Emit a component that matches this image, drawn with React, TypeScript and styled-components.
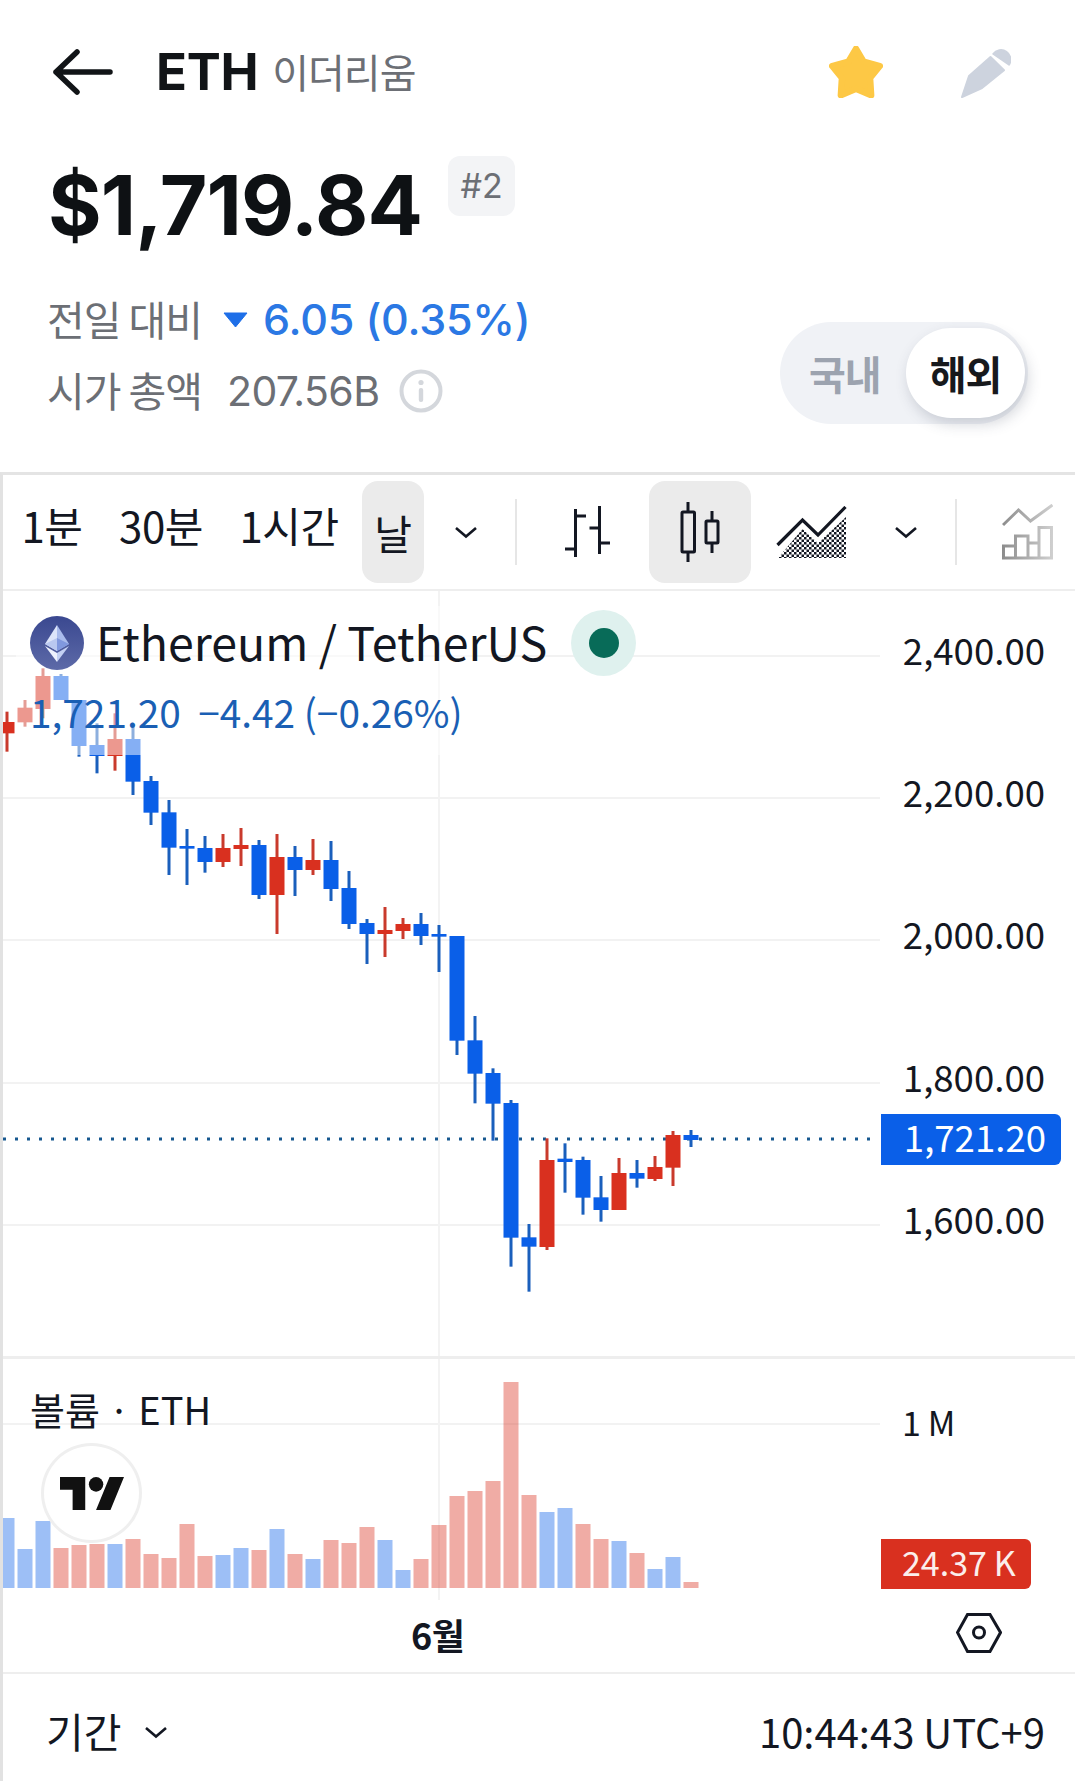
import React from "react";
import styled, { createGlobalStyle } from "styled-components";

const CJK = `"Noto Sans CJK KR", "Noto Sans", sans-serif`;
const INTER = `Inter, "Noto Sans CJK KR", sans-serif`;

const Global = createGlobalStyle`
  html, body { margin: 0; padding: 0; background: #fff; }
  body { font-family: ${CJK}; }
  #root { width: 1075px; height: 1781px; overflow: hidden; }
`;

const Page = styled.div`
  width: 1075px;
  height: 1781px;
  display: flex;
  flex-direction: column;
  background: #fff;
  color: #131722;
`;

const Header = styled.header`
  height: 472px;
  padding: 44px 47px 0 49px;
  box-sizing: border-box;
  display: flex;
  flex-direction: column;
`;

const TopBar = styled.div`
  height: 56px;
  display: flex;
  align-items: center;
`;
const BackIcon = styled.svg`
  margin-left: 4px;
  flex: none;
`;
const Symbol = styled.span`
  margin-left: 43px;
  font: 700 51px/56px ${INTER};
  color: #111417;
  letter-spacing: -0.3px;
`;
const CoinName = styled.span`
  margin-left: 14px;
  margin-bottom: 2px;
  font: 400 40px/56px ${CJK};
  color: #6c6f75;
  letter-spacing: -1px;
`;
const Star = styled.svg`
  margin-left: auto;
  margin-right: 2px;
  flex: none;
`;
const Pencil = styled.svg`
  margin-left: 74px;
  margin-right: 17px;
  flex: none;
`;

const PriceRow = styled.div`
  margin-top: 56px;
  height: 100px;
  display: flex;
  align-items: flex-start;
`;
const Price = styled.span`
  margin-left: -1px;
  font: 700 82px/100px ${INTER};
  color: #0e1114;
  letter-spacing: -0.9px;
`;
const Rank = styled.span`
  margin-left: 26px;
  width: 67px;
  height: 60px;
  border-radius: 12px;
  background: #f3f4f6;
  color: #6c6f75;
  display: flex;
  align-items: center;
  justify-content: center;
  font: 400 34px/60px ${INTER};
`;

const Summary = styled.div`
  margin-top: 34px;
  display: flex;
  justify-content: space-between;
  align-items: flex-start;
`;
const Stats = styled.div`
  display: flex;
  flex-direction: column;
  gap: 11px;
`;
const StatLine = styled.div`
  height: 60px;
  display: flex;
  align-items: center;
`;
const StatLabel = styled.span`
  width: 152px;
  margin-left: -2px;
  margin-bottom: 4px;
  font: 400 41px/60px ${CJK};
  color: #6c6f75;
  letter-spacing: -1px;
  white-space: nowrap;
`;
const DownMark = styled.svg`
  margin-left: 24px;
  flex: none;
`;
const Change = styled.span`
  margin-left: 15px;
  margin-bottom: 2px;
  font: 500 43px/60px ${INTER};
  color: #2b78e4;
  letter-spacing: -0.2px;
`;
const MarketCap = styled.span`
  margin-left: 28px;
  font: 400 41px/60px ${INTER};
  color: #6c6f75;
  letter-spacing: -0.6px;
`;
const InfoIcon = styled.svg`
  margin-left: 20px;
  flex: none;
`;

const Toggle = styled.div`
  margin-top: 32px;
  width: 248px;
  height: 102px;
  box-sizing: border-box;
  padding: 6px 3px 6px 29px;
  border-radius: 51px;
  background: #f0f2f6;
  display: flex;
  align-items: center;
  justify-content: space-between;
`;
const ToggleOff = styled.span`
  font: 700 40px/1 ${CJK};
  color: #9ca3af;
  letter-spacing: -1px;
`;
const ToggleOn = styled.span`
  width: 119px;
  height: 90px;
  border-radius: 45px;
  background: #fff;
  box-shadow: 3px 6px 14px rgba(60, 70, 90, 0.22);
  display: flex;
  align-items: center;
  justify-content: center;
  font: 700 40px/1 ${CJK};
  color: #17191c;
  letter-spacing: -1px;
`;

const Frame = styled.section`
  flex: 1;
  min-height: 0;
  border-top: 3px solid #e4e4e4;
  border-left: 3px solid #e2e2e2;
  display: flex;
  flex-direction: column;
`;

const Toolbar = styled.div`
  height: 116px;
  box-sizing: border-box;
  border-bottom: 2px solid #eeeeee;
  padding-left: 20px;
  display: flex;
  align-items: center;
`;
const Tab = styled.span<{ $w: number; $ml: number }>`
  width: ${(p) => p.$w}px;
  margin-left: ${(p) => p.$ml}px;
  margin-bottom: 14px;
  flex: none;
  display: flex;
  justify-content: center;
  white-space: nowrap;
  font: 400 42px/1.2 ${CJK};
  color: #131722;
  letter-spacing: -0.5px;
`;
const ActiveCell = styled.span<{ $w: number; $ml: number }>`
  width: ${(p) => p.$w}px;
  height: 102px;
  margin-left: ${(p) => p.$ml}px;
  flex: none;
  border-radius: 16px;
  background: #ebebeb;
  display: flex;
  align-items: center;
  justify-content: center;
  font: 400 41px/1 ${CJK};
  color: #131722;
`;
const ToolIcon = styled.svg<{ $ml: number }>`
  margin-left: ${(p) => p.$ml}px;
  flex: none;
`;
const Divider = styled.span<{ $ml: number }>`
  width: 2px;
  height: 66px;
  margin-left: ${(p) => p.$ml}px;
  flex: none;
  background: #e6e6e6;
`;

const PricePane = styled.div`
  position: relative;
  height: 768px;
  box-sizing: border-box;
  border-bottom: 3px solid #eeeeee;
  flex: none;
`;
const ChartCanvas = styled.svg`
  display: block;
`;
const AxisLabel = styled.span<{ $y: number }>`
  position: absolute;
  right: 30px;
  top: ${(p) => p.$y}px;
  transform: translateY(-50%);
  font: 400 36.6px/1 ${CJK};
  color: #131722;
  white-space: nowrap;
`;
const VolumeAxisLabel = styled.span<{ $y: number }>`
  position: absolute;
  left: 899px;
  top: ${(p) => p.$y}px;
  transform: translateY(-50%);
  font: 400 34px/1 ${CJK};
  color: #131722;
  white-space: pre;
`;
const LastPrice = styled.span<{ $y: number }>`
  position: absolute;
  left: 878px;
  top: ${(p) => p.$y}px;
  width: 180px;
  height: 51px;
  box-sizing: border-box;
  padding-right: 15px;
  border-radius: 0 6px 6px 0;
  background: #0a5fe8;
  color: #fff;
  text-align: right;
  font: 400 36.6px/45px ${CJK};
`;
const Legend = styled.div`
  position: absolute;
  left: 13px;
  top: 15px;
  width: 460px;
  height: 149px;
  box-sizing: border-box;
  padding: 4px 0 0 14px;
  background: rgba(255, 255, 255, 0.5);
`;
const LegendTitle = styled.div`
  height: 66px;
  display: flex;
  align-items: center;
`;
const LegendText = styled.span`
  margin-left: 12px;
  font: 400 46.5px/58px ${CJK};
  color: #131722;
  white-space: nowrap;
  transform: translateY(-2px);
`;
const LiveDot = styled.span`
  width: 65px;
  height: 66px;
  margin-left: 24px;
  border-radius: 50%;
  background: #dff1ee;
  display: flex;
  align-items: center;
  justify-content: center;
  flex: none;
  &::after {
    content: "";
    width: 30px;
    height: 30px;
    border-radius: 50%;
    background: #086b58;
  }
`;
const LegendValues = styled.div`
  margin-top: 2px;
  font: 400 38.8px/66px ${CJK};
  color: #1a5fb4;
  white-space: pre;
`;

const VolumePane = styled.div`
  position: relative;
  height: 241px;
  flex: none;
`;
const VolumeTitle = styled.span`
  position: absolute;
  left: 27px;
  top: 27px;
  font: 400 38px/1.2 ${CJK};
  color: #131722;
  white-space: pre;
`;
const TvBadge = styled.span`
  position: absolute;
  left: 38px;
  top: 84px;
  width: 101px;
  height: 100px;
  box-sizing: border-box;
  border-radius: 50%;
  border: 3px solid #efefef;
  background: #fff;
  display: flex;
  align-items: center;
  justify-content: center;
`;
const VolumeTag = styled.span<{ $y: number }>`
  position: absolute;
  left: 878px;
  top: ${(p) => p.$y}px;
  width: 150px;
  height: 50px;
  box-sizing: border-box;
  padding-left: 21px;
  border-radius: 0 6px 6px 0;
  background: #d9301f;
  color: #fbeeec;
  font: 400 34px/45px ${CJK};
  white-space: pre;
`;

const TimeAxis = styled.div`
  height: 74px;
  box-sizing: border-box;
  border-bottom: 2px solid #eeeeee;
  display: flex;
  align-items: center;
  flex: none;
`;
const MonthTick = styled.span`
  margin-left: 408px;
  margin-bottom: 5px;
  font: 700 36px/1 ${CJK};
  color: #131722;
  letter-spacing: -0.5px;
`;
const SettingsIcon = styled.svg`
  margin-left: auto;
  margin-right: 73px;
  margin-bottom: 7px;
  flex: none;
`;

const Footer = styled.div`
  flex: 1;
  padding: 6px 30px 0 43px;
  display: flex;
  align-items: center;
`;
const RangeLabel = styled.span`
  font: 400 41px/1 ${CJK};
  color: #131722;
`;
const RangeChevron = styled.svg`
  margin-left: 23px;
  flex: none;
  margin-top: 3px;
`;
const Clock = styled.span`
  margin-left: auto;
  font: 400 40px/1 ${CJK};
  color: #131722;
  white-space: nowrap;
`;

type Candle = [number, "b" | "r", number, number, number, number];

const z3 = (v: number) => 660 + v / 3;
const z4 = (v: number) => 900 + v / 3;

const rawA: [("b" | "r"), number, number, number, number][] = [
  ["r", 186, 220, 155, 275], ["r", 143, 187, 120, 200], ["r", 48, 147, 25, 175], ["b", 48, 120, 42, 120],
  ["b", 120, 258, 120, 290], ["b", 255, 288, 190, 340], ["r", 237, 288, 160, 332], ["b", 237, 365, 195, 405],
  ["b", 363, 458, 348, 495], ["b", 457, 563, 420, 645], ["b", 558, 566, 507, 675], ["b", 564, 606, 528, 638],
  ["r", 564, 606, 522, 621], ["r", 555, 567, 504, 618], ["b", 555, 705, 540, 717], ["r", 591, 705, 522, 822],
  ["b", 591, 630, 558, 708], ["r", 600, 630, 537, 645], ["b", 600, 687, 543, 723], ["b", 684, 792, 633, 807],
  ["b", 789, 822, 777, 912], ["r", 810, 822, 741, 891], ["r", 792, 813, 774, 837], ["b", 792, 828, 759, 855],
  ["b", 822, 830, 795, 936],
];
const rawB: [("b" | "r"), number, number, number, number][] = [
  ["b", 108, 422, 108, 465], ["b", 421, 521, 348, 610], ["b", 519, 611, 505, 722], ["b", 609, 1013, 600, 1100],
  ["b", 1012, 1040, 972, 1175], ["r", 780, 1041, 715, 1050], ["b", 776, 786, 730, 878], ["b", 780, 893, 770, 944],
  ["b", 892, 930, 828, 965], ["r", 819, 930, 774, 930], ["b", 819, 836, 780, 863], ["r", 801, 837, 768, 843],
  ["r", 705, 803, 693, 858], ["b", 705, 720, 690, 741],
];
const candles: Candle[] = [
  ...rawA.map((c, i): Candle => [i, c[0], z3(c[1]), z3(c[2]), z3(c[3]), z3(c[4])]),
  ...rawB.map((c, i): Candle => [i + 25, c[0], z4(c[1]), z4(c[2]), z4(c[3]), z4(c[4])]),
];

const volumes: ["b" | "r", number][] = [
  ["b", 534], ["b", 627], ["b", 543], ["r", 624], ["r", 615], ["r", 612], ["b", 612], ["r", 597], ["r", 642], ["r", 654],
  ["r", 552], ["r", 648], ["b", 645], ["b", 624], ["r", 630], ["b", 567], ["r", 642], ["b", 657], ["r", 600], ["r", 609],
  ["r", 561], ["b", 600], ["b", 690], ["r", 657], ["r", 555], ["r", 468], ["r", 453], ["r", 423], ["r", 126], ["r", 465],
  ["b", 516], ["b", 504], ["r", 552], ["r", 597], ["b", 603], ["r", 639], ["b", 687], ["b", 651], ["r", 726],
];

const BODY = { b: "#0a5fe8", r: "#d9301f" };
const WICK = { b: "#1a5fbc", r: "#c93a2c" };
const cx = (i: number) => 7 + 18 * i;

const priceTicks: [string, number][] = [
  ["2,400.00", 656], ["2,200.00", 798], ["2,000.00", 940], ["1,800.00", 1083], ["1,600.00", 1225],
];

const Chevron: React.FC<{ ml?: number }> = ({ ml = 0 }) => (
  <ToolIcon $ml={ml} width={24} height={13} viewBox="0 0 24 13">
    <path d="M2 2 L12 10.5 L22 2" fill="none" stroke="#131722" strokeWidth="2.6" />
  </ToolIcon>
);

const EthLogo = () => (
  <svg width={54} height={54} viewBox="0 0 54 54" style={{ flex: "none" }}>
    <defs>
      <linearGradient id="ethbg" x1="0" y1="0" x2="0" y2="1">
        <stop offset="0" stopColor="#3a4890" />
        <stop offset="1" stopColor="#5d6aa8" />
      </linearGradient>
    </defs>
    <circle cx="27" cy="27" r="27" fill="url(#ethbg)" />
    <path d="M27 9 L15 28 L27 35 Z" fill="#dde5fa" />
    <path d="M27 9 L39 28 L27 35 Z" fill="#a9bbec" />
    <path d="M15 28 L27 22 L27 35 Z" fill="#b9c8f0" />
    <path d="M39 28 L27 22 L27 35 Z" fill="#8098de" />
    <path d="M15 30 L27 46 L27 37 Z" fill="#eef2fd" />
    <path d="M39 30 L27 46 L27 37 Z" fill="#c3d0f3" />
  </svg>
);

export default function App() {
  return (
    <Page>
      <Global />
      <Header>
        <TopBar>
          <BackIcon width={60} height={46} viewBox="53 49 60 46">
            <path d="M77 52 L56 72 L77 92 M56 72 H110" fill="none" stroke="#111417" strokeWidth="5.5" strokeLinecap="round" strokeLinejoin="round" />
          </BackIcon>
          <Symbol>ETH</Symbol>
          <CoinName>이더리움</CoinName>
          <Star width={54} height={52} viewBox="2 1.5 50 48">
            <path d="M27 4 L34 16 L49 20 L40 31 L41 47 L27 41 L13 47 L14 31 L5 20 L20 16 Z" fill="#fdc845" stroke="#fdc845" strokeWidth="6" strokeLinejoin="round" />
          </Star>
          <Pencil width={52} height={52} viewBox="960 45 52 52">
            <path d="M963 96 L970 75 L991.5 56 L1005 69.3 L983 87 Z" fill="#cdd3de" stroke="#cdd3de" strokeWidth="2" strokeLinejoin="round" />
            <path d="M994 53 A9.5 9.5 0 0 1 1010 64 Z" fill="#cdd3de" stroke="#cdd3de" strokeWidth="1.5" strokeLinejoin="round" />
          </Pencil>
        </TopBar>
        <PriceRow>
          <Price>$1,719.84</Price>
          <Rank>#2</Rank>
        </PriceRow>
        <Summary>
          <Stats>
            <StatLine>
              <StatLabel>전일 대비</StatLabel>
              <DownMark width={25} height={16} viewBox="0 0 25 16">
                <path d="M1 1 H24 L12.5 15 Z" fill="#1e6fe8" stroke="#1e6fe8" strokeWidth="1" strokeLinejoin="round" />
              </DownMark>
              <Change>6.05 (0.35%)</Change>
            </StatLine>
            <StatLine>
              <StatLabel>시가 총액</StatLabel>
              <MarketCap>207.56B</MarketCap>
              <InfoIcon width={44} height={44} viewBox="0 0 44 44">
                <circle cx="22" cy="22" r="19.5" fill="none" stroke="#d4d7dc" strokeWidth="4" />
                <circle cx="22" cy="13.5" r="2.6" fill="#d4d7dc" />
                <rect x="19.8" y="19" width="4.4" height="14" rx="2" fill="#d4d7dc" />
              </InfoIcon>
            </StatLine>
          </Stats>
          <Toggle>
            <ToggleOff>국내</ToggleOff>
            <ToggleOn>해외</ToggleOn>
          </Toggle>
        </Summary>
      </Header>

      <Frame>
        <Toolbar>
          <Tab $w={58} $ml={0}>1분</Tab>
          <Tab $w={84} $ml={38}>30분</Tab>
          <Tab $w={96} $ml={38}>1시간</Tab>
          <ActiveCell $w={62} $ml={25}>날</ActiveCell>
          <Chevron ml={30} />
          <Divider $ml={37} />
          <ToolIcon $ml={48} width={45} height={52} viewBox="565 508 45 52">
            <path d="M575.5 511 V559 M575.5 518 H586 M565 551 H575.5 M599.5 508 V556 M589.5 530 H599.5 M599.5 545 H610" fill="none" stroke="#131722" strokeWidth="3" />
          </ToolIcon>
          <ActiveCell $w={102} $ml={39}>
            <svg width={40} height={60} viewBox="681.5 502 40 60">
              <path d="M689.5 502 V512 M689.5 552 V562 M713.5 511 V521 M713.5 543 V553" fill="none" stroke="#131722" strokeWidth="3" />
              <rect x="683.5" y="512" width="12.5" height="40" rx="1" fill="none" stroke="#131722" strokeWidth="3" />
              <rect x="707.5" y="521" width="12" height="22" rx="1" fill="none" stroke="#131722" strokeWidth="3" />
            </svg>
          </ActiveCell>
          <ToolIcon $ml={25} width={71} height={52} viewBox="777 504 71 52">
            <defs>
              <pattern id="check" width="5" height="5" patternUnits="userSpaceOnUse">
                <rect width="2.5" height="2.5" fill="#131722" />
                <rect x="2.5" y="2.5" width="2.5" height="2.5" fill="#131722" />
              </pattern>
            </defs>
            <path d="M779 556 L803.5 527 L819 541 L847 515 V556 Z" fill="url(#check)" />
            <path d="M778.5 543 L803.5 518 L819 533 L846.5 505" fill="none" stroke="#131722" strokeWidth="3.2" />
          </ToolIcon>
          <Chevron ml={47} />
          <Divider $ml={37} />
          <ToolIcon $ml={45} width={51} height={56} viewBox="1003 504 51 56">
            <defs>
              <linearGradient id="fade" gradientUnits="userSpaceOnUse" x1="1003" y1="0" x2="1054" y2="0">
                <stop offset="0" stopColor="#8c8c8c" />
                <stop offset="1" stopColor="#d0d0d0" />
              </linearGradient>
            </defs>
            <path d="M1004 525 L1019.5 510 L1031.5 521 L1053.5 505" fill="none" stroke="url(#fade)" strokeWidth="3" />
            <path d="M1004.5 558 V546 H1016.5 V558 Z M1016.5 558 V536 H1029 V558 Z M1029 558 V543 H1040 V558 Z M1040 558 V527.5 H1052.5 V558 Z" fill="none" stroke="url(#fade)" strokeWidth="3" />
          </ToolIcon>
        </Toolbar>

        <PricePane>
          <ChartCanvas width={1072} height={765} viewBox="3 591 1072 765">
            {priceTicks.map(([label, y]) => (
              <line key={label} x1={3} x2={880} y1={y} y2={y} stroke="#f2f2f2" strokeWidth="2" />
            ))}
            <line x1={439} x2={439} y1={591} y2={1356} stroke="#f3f3f3" strokeWidth="2" />
            <line x1={3} x2={872} y1={1139} y2={1139} stroke="#17588f" strokeWidth="3" strokeDasharray="3 9" />
            {candles.map(([i, c, top, bottom, wTop, wBottom]) => (
              <g key={i}>
                <rect x={cx(i) - 1.5} y={wTop} width={3} height={wBottom - wTop} fill={WICK[c]} />
                <rect x={cx(i) - 7.5} y={top} width={15} height={bottom - top} fill={BODY[c]} />
              </g>
            ))}
          </ChartCanvas>
          <Legend>
            <LegendTitle>
              <EthLogo />
              <LegendText>Ethereum / TetherUS</LegendText>
              <LiveDot />
            </LegendTitle>
            <LegendValues>{"1,721.20  −4.42 (−0.26%)"}</LegendValues>
          </Legend>
          {priceTicks.map(([label, y]) => (
            <AxisLabel key={label} $y={y - 591 - 6}>{label}</AxisLabel>
          ))}
          <LastPrice $y={1114 - 591}>1,721.20</LastPrice>
        </PricePane>

        <VolumePane>
          <ChartCanvas width={1072} height={241} viewBox="3 1359 1072 241">
            <line x1={3} x2={880} y1={1424} y2={1424} stroke="#f2f2f2" strokeWidth="2" />
            <line x1={439} x2={439} y1={1359} y2={1600} stroke="#f3f3f3" strokeWidth="2" />
            {volumes.map(([c, top], i) => {
              const y = 1340 + top / 3;
              return <rect key={i} x={cx(i) - 7.5} y={y} width={15} height={1588 - y} fill={BODY[c]} opacity={0.4} />;
            })}
          </ChartCanvas>
          <VolumeTitle>{"볼륨 · ETH"}</VolumeTitle>
          <TvBadge>
            <svg width={64} height={33} viewBox="0 4 35.5 18" preserveAspectRatio="none">
              <path d="M14 22H7V11H0V4h14v18zM28 22h-8l7.5-18h8L28 22z" fill="#111" />
              <circle cx="20" cy="8" r="4" fill="#111" />
            </svg>
          </TvBadge>
          <VolumeAxisLabel $y={1424 - 1359 - 2}>{"1\u2009M"}</VolumeAxisLabel>
          <VolumeTag $y={1539 - 1359}>{"24.37\u2009K"}</VolumeTag>
        </VolumePane>

        <TimeAxis>
          <MonthTick>6월</MonthTick>
          <SettingsIcon width={46} height={40} viewBox="956.5 1612.5 46 40">
            <path d="M958 1632 L968 1614 H990.5 L1001 1632 L990.5 1651 H968 Z" fill="none" stroke="#131722" strokeWidth="3" />
            <circle cx="979.5" cy="1632" r="5.5" fill="none" stroke="#131722" strokeWidth="3" />
          </SettingsIcon>
        </TimeAxis>

        <Footer>
          <RangeLabel>기간</RangeLabel>
          <RangeChevron width={24} height={13} viewBox="0 0 24 13">
            <path d="M2 2 L12 10.5 L22 2" fill="none" stroke="#131722" strokeWidth="2.6" />
          </RangeChevron>
          <Clock>10:44:43 UTC+9</Clock>
        </Footer>
      </Frame>
    </Page>
  );
}
